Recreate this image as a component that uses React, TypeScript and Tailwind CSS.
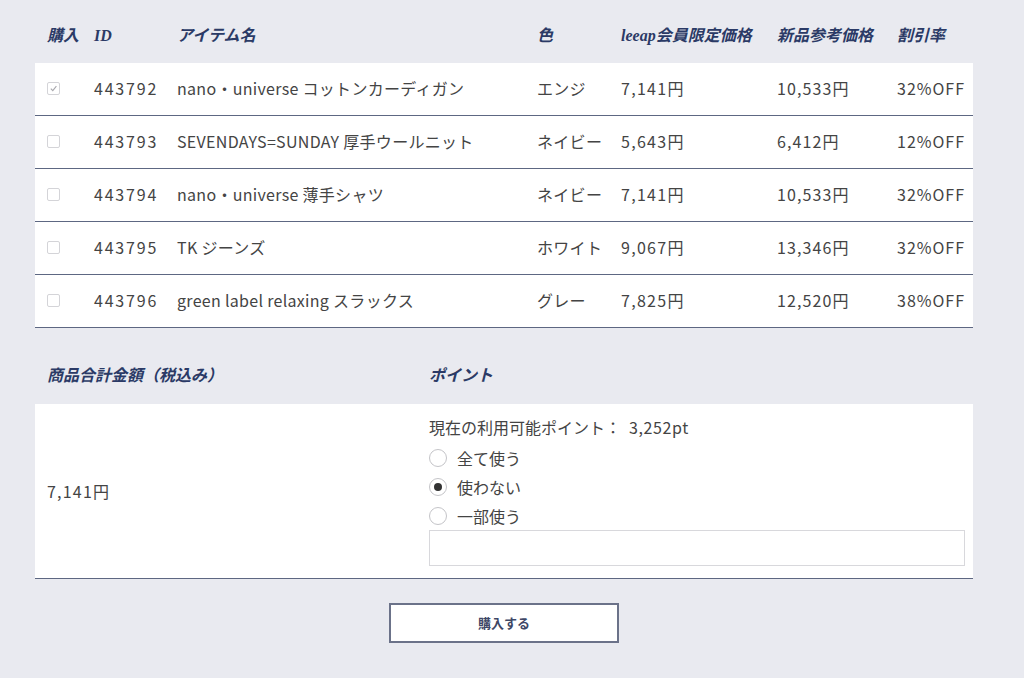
import React from "react";

const rows = [
  { checked: true, id: "443792", name: "nano・universe コットンカーディガン", color: "エンジ", price: "7,141円", ref: "10,533円", off: "32%OFF" },
  { checked: false, id: "443793", name: "SEVENDAYS=SUNDAY 厚手ウールニット", color: "ネイビー", price: "5,643円", ref: "6,412円", off: "12%OFF" },
  { checked: false, id: "443794", name: "nano・universe 薄手シャツ", color: "ネイビー", price: "7,141円", ref: "10,533円", off: "32%OFF" },
  { checked: false, id: "443795", name: "TK ジーンズ", color: "ホワイト", price: "9,067円", ref: "13,346円", off: "32%OFF" },
  { checked: false, id: "443796", name: "green label relaxing スラックス", color: "グレー", price: "7,825円", ref: "12,520円", off: "38%OFF" },
];

const grid = "grid grid-cols-[47px_83px_360px_84px_156px_120px_1fr] items-center pl-3";
const headFont = "font-['Liberation_Serif','Noto_Sans_CJK_JP',serif] italic font-bold text-[16px] text-[#2b3a66]";

function Checkbox({ checked }: { checked: boolean }) {
  return (
    <span className="flex h-[13px] w-[13px] items-center justify-center rounded-[2px] border border-[#d4d4d8] bg-white">
      {checked && (
        <svg width="9" height="9" viewBox="0 0 10 10">
          <path d="M2 5.2 L4.2 7.4 L8.2 2.4" fill="none" stroke="#a8a8ae" strokeWidth="1.2" />
        </svg>
      )}
    </span>
  );
}

function Radio({ checked, label }: { checked: boolean; label: string }) {
  return (
    <div className="flex h-[29px] items-center gap-[10px]">
      <span className="flex h-[18px] w-[18px] items-center justify-center rounded-full border border-[#c4c4c8] bg-white">
        {checked && <span className="h-[8px] w-[8px] rounded-full bg-[#333]" />}
      </span>
      <span>{label}</span>
    </div>
  );
}

export default function App() {
  return (
    <div className="min-h-[678px] w-full bg-[#e9eaf0] font-['Noto_Sans_CJK_JP',sans-serif] text-[#444]">
      <div className="ml-[35px] w-[938px]">
        <div className={`${grid} h-[63px] pt-2 ${headFont}`}>
          <div>購入</div>
          <div>ID</div>
          <div>アイテム名</div>
          <div>色</div>
          <div>leeap会員限定価格</div>
          <div>新品参考価格</div>
          <div>割引率</div>
        </div>
        <div className="bg-white">
          {rows.map((r) => (
            <div key={r.id} className={`${grid} h-[53px] border-b border-[#5d6782] pb-[2px] text-[16px] tracking-[0.3px]`}>
              <div><Checkbox checked={r.checked} /></div>
              <div className="tracking-[1.8px]">{r.id}</div>
              <div>{r.name}</div>
              <div>{r.color}</div>
              <div className="tracking-[1.3px]">{r.price}</div>
              <div className="tracking-[1.1px]">{r.ref}</div>
              <div className="tracking-[1px]">{r.off}</div>
            </div>
          ))}
        </div>
        <div className={`grid h-[76px] grid-cols-[382px_1fr] items-center pl-3 pt-[20px] ${headFont}`}>
          <div>商品合計金額（税込み）</div>
          <div>ポイント</div>
        </div>
        <div className="grid grid-cols-[382px_1fr] border-b border-[#5d6782] bg-white pl-3 text-[16px]">
          <div className="flex items-center tracking-[1.2px]">7,141円</div>
          <div className="pb-[12px] pr-2 pt-[12px]">
            <div className="flex h-[22px] items-center">
              <span>現在の利用可能ポイント：</span>
              <span className="ml-[8px] tracking-[0.6px]">3,252pt</span>
            </div>
            <div className="mt-[5px]">
              <Radio checked={false} label="全て使う" />
              <Radio checked={true} label="使わない" />
              <Radio checked={false} label="一部使う" />
            </div>
            <input className="block h-[36px] w-full border border-[#d8d8dc] bg-white outline-none" />
          </div>
        </div>
        <div className="flex justify-center pt-[24px]">
          <button className="h-[40px] w-[230px] border-2 border-[#6b7289] bg-white text-[13px] font-bold text-[#3e4766]">
            購入する
          </button>
        </div>
      </div>
    </div>
  );
}
